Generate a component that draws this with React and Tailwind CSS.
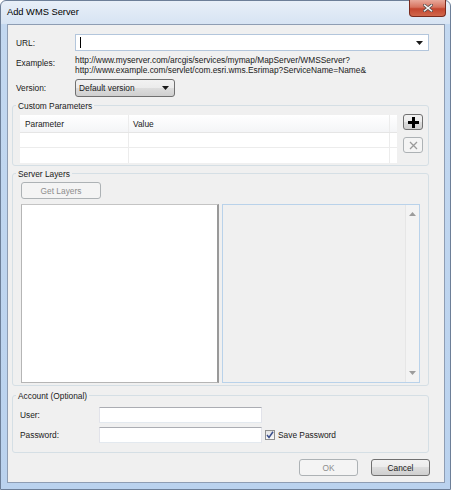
import React from 'react';

// Win7-style push button
function Btn({ children, disabled, className = '' }) {
  const look = disabled
    ? 'border-[#adb2b5] bg-[#f4f4f4] text-[#8d8d8d]'
    : 'border-[#707070] bg-[linear-gradient(#f2f2f2_0%,#ebebeb_50%,#dddddd_50%,#cfcfcf_100%)] text-[#1a1a1a]';
  return (
    <div className={`flex items-center justify-center rounded-[3px] border ${look} ${className}`}>
      {children}
    </div>
  );
}

function Arrow({ className = '', up = false, color = '#1a1a1a' }) {
  return (
    <svg width="7" height="4" viewBox="0 0 7 4" className={className}>
      <path d={up ? 'M0 4 L3.5 0 L7 4 Z' : 'M0 0 L7 0 L3.5 4 Z'} fill={color} />
    </svg>
  );
}

function Group({ title, className = '', children }) {
  return (
    <fieldset className={`ml-[4px] w-[417px] rounded-[3px] border border-[#d5dfe5] ${className}`}>
      <legend className="ml-[3px] h-[12px] px-[2px] pt-[2px] leading-[10px]">{title}</legend>
      {children}
    </fieldset>
  );
}

function TextBox({ className = '' }) {
  return <div className={`border border-[#abadb3] border-b-[#e3e9ef] border-x-[#e2e3ea] bg-white ${className}`} />;
}

export default function App() {
  return (
    <div className="h-[490px] w-[451px] bg-white font-['Liberation_Sans',Arial,sans-serif] text-[8.35px] leading-[10px] text-[#1a1a1a]">
      <div className="flex h-[490px] w-[451px] flex-col rounded-t-[6px] border border-[#6d7f98] bg-[linear-gradient(180deg,#e8eff8_0px,#d7e4f3_23px,#c3d8f0_23px,#bad2ee_100%)] pb-[6px] pl-[6px] pr-[5px]">
        {/* title bar */}
        <div className="flex h-[23px] items-start justify-between">
          <span className="self-center pb-[1px] text-[9.3px] text-black">Add WMS Server</span>
          <div className="-mr-[1px] -mt-[1px] flex h-[17px] w-[37px] items-center justify-center rounded-b-[4px] border border-t-0 border-[#7a2a1d] bg-[linear-gradient(#e9a99b_0%,#d7735f_45%,#c4462f_55%,#d0674c_100%)]">
            <svg width="10" height="8" viewBox="0 0 10 8">
              <path d="M1.5 1.2 L8.5 6.8 M8.5 1.2 L1.5 6.8" stroke="#5a4845" strokeWidth="3" strokeLinecap="square" />
              <path d="M1.5 1.2 L8.5 6.8 M8.5 1.2 L1.5 6.8" stroke="#f4f4f4" strokeWidth="1.5" strokeLinecap="square" />
            </svg>
          </div>
        </div>

        {/* client area */}
        <div className="flex flex-1 flex-col border border-[#8e9db3] bg-[#f0f0f0]">
          {/* URL */}
          <div className="mt-[9px] flex h-[17px] items-center">
            <div className="w-[67px] pl-[8px]">URL:</div>
            <div className="flex h-[17px] w-[354px] items-center border border-[#b3c6dc] bg-white pl-[4px] pr-[5px]">
              <div className="h-[11px] w-px bg-black" />
              <div className="flex-1" />
              <Arrow />
            </div>
          </div>

          {/* examples */}
          <div className="mt-[4px] flex">
            <div className="w-[67px] pl-[8px] pt-[3px]">Examples:</div>
            <div className="leading-[10px]">
              <div>http://www.myserver.com/arcgis/services/mymap/MapServer/WMSServer?</div>
              <div>http://www.example.com/servlet/com.esri.wms.Esrimap?ServiceName=Name&amp;</div>
            </div>
          </div>

          {/* version */}
          <div className="mt-[4px] flex h-[18px] items-center">
            <div className="w-[67px] pl-[8px]">Version:</div>
            <Btn className="h-[18px] w-[100px] !justify-between pl-[3px] pr-[5px]">
              <span>Default version</span>
              <Arrow />
            </Btn>
          </div>

          {/* custom parameters */}
          <Group title="Custom Parameters" className="mt-[2px] h-[67px]">
            <div className="flex">
              <div className="ml-[7px] mt-[4px] flex h-[48px] w-[377px] flex-col bg-white">
                <div className="flex h-[18px] border-b border-[#e5e5e5] bg-[linear-gradient(#ffffff,#f4f5f7)]">
                  <div className="flex w-[109px] items-center border-r border-[#ececec] pl-[5px]">Parameter</div>
                  <div className="flex w-[261px] items-center border-r border-[#ececec] pl-[4px]">Value</div>
                  <div className="flex-1" />
                </div>
                <div className="flex h-[15px] border-b border-[#ececec]">
                  <div className="w-[109px] border-r border-[#ececec]" />
                  <div className="w-[261px] border-r border-[#ececec]" />
                </div>
                <div className="flex h-[15px]">
                  <div className="w-[109px] border-r border-[#ececec]" />
                  <div className="w-[261px] border-r border-[#ececec]" />
                </div>
              </div>
              <div className="ml-[6px] flex flex-col">
                <Btn className="mt-[3px] h-[16px] w-[20px]">
                  <svg width="11" height="11" viewBox="0 0 11 11">
                    <path d="M4 0 H7 V4 H11 V7 H7 V11 H4 V7 H0 V4 H4 Z" fill="#000" />
                  </svg>
                </Btn>
                <Btn disabled className="mt-[7px] h-[16px] w-[20px]">
                  <svg width="9" height="9" viewBox="0 0 9 9">
                    <path d="M1 1 L8 8 M8 1 L1 8" stroke="#9a9a9a" strokeWidth="1.3" />
                  </svg>
                </Btn>
              </div>
            </div>
          </Group>

          {/* server layers */}
          <Group title="Server Layers" className="mt-[1px] h-[219px]">
            <Btn disabled className="ml-[8px] mt-[3px] h-[17px] w-[80px]">Get Layers</Btn>
            <div className="ml-[8px] mt-[5px] flex h-[179px]">
              <div className="w-[198px] border border-[#b5b5b5] border-r-2 border-r-[#999999] border-t-[#c4c4c4] bg-white" />
              <div className="ml-[3px] flex w-[198px] border border-[#b9d2ea] bg-[#f0f0f0]">
                <div className="flex-1" />
                <div className="flex w-[14px] flex-col items-center justify-between border-l border-[#e6e6e6] bg-[#f3f3f3] py-[7px]">
                  <Arrow up color="#9c9c9c" />
                  <Arrow color="#9c9c9c" />
                </div>
              </div>
            </div>
          </Group>

          {/* account */}
          <Group title="Account (Optional)" className="mt-[3px] h-[64px]">
            <div className="mt-[6px] flex h-[16px] items-center">
              <div className="w-[86px] pl-[7px]">User:</div>
              <TextBox className="h-[16px] w-[163px]" />
            </div>
            <div className="mt-[4px] flex h-[16px] items-center">
              <div className="w-[86px] pl-[7px]">Password:</div>
              <TextBox className="h-[16px] w-[163px]" />
              <div className="ml-[3px] flex h-[10px] w-[10px] items-center justify-center border border-[#8f8f8f] bg-[linear-gradient(#e4e4e4,#fafafa)]">
                <svg width="8" height="8" viewBox="0 0 8 8">
                  <path d="M1 4 L3 6.5 L7 0.8" stroke="#3b4f8c" strokeWidth="1.5" fill="none" />
                </svg>
              </div>
              <span className="ml-[3px]">Save Password</span>
            </div>
          </Group>

          {/* dialog buttons */}
          <div className="mt-[6px] flex justify-end gap-[13px] pr-[14px]">
            <Btn disabled className="h-[17px] w-[59px]">OK</Btn>
            <Btn className="h-[17px] w-[59px]">Cancel</Btn>
          </div>
        </div>
      </div>
    </div>
  );
}
